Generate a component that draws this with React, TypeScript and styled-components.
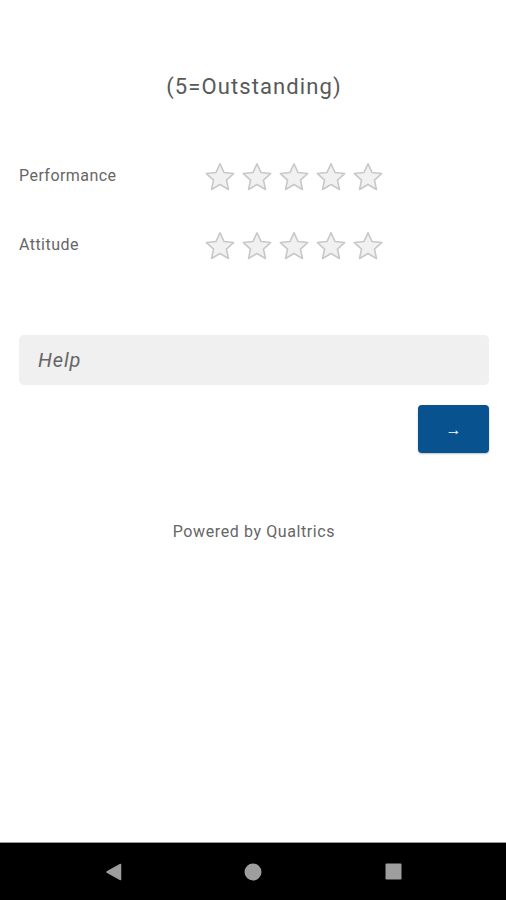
import styled, { createGlobalStyle } from 'styled-components';

const GlobalStyle = createGlobalStyle`
    html, body {
        margin: 0;
        padding: 0;
        background: #ffffff;
    }
    body {
        font-family: Roboto, "Noto Sans", Arial, sans-serif;
    }
`;

const Screen = styled.div`
    display: flex;
    flex-direction: column;
    width: 506px;
    height: 900px;
    overflow: hidden;
`;

const Survey = styled.main`
    flex: 1 1 auto;
    display: flex;
    flex-direction: column;
    padding: 73px 17px 0 19px;
`;

const Title = styled.h1`
    margin: 0;
    font-size: 22px;
    font-weight: 400;
    line-height: 28px;
    letter-spacing: 1.1px;
    color: #585858;
    text-align: center;
`;

const Matrix = styled.div`
    display: flex;
    flex-direction: column;
    gap: 35px;
    margin-top: 59px;
`;

const RatingRow = styled.div`
    display: flex;
    align-items: center;
    height: 34px;
`;

const Label = styled.span`
    flex: 0 0 185px;
    font-size: 16px;
    line-height: 20px;
    letter-spacing: 0.45px;
    color: #666666;
    margin-top: -3px;
`;

const Stars = styled.div`
    display: flex;
    gap: 5px;
`;

const StarButton = styled.button`
    display: flex;
    padding: 0;
    border: none;
    background: none;
    width: 32px;
    height: 31px;
    cursor: pointer;
`;

const HelpField = styled.input`
    box-sizing: border-box;
    width: 100%;
    height: 50px;
    margin-top: 72px;
    padding: 0 19px;
    border: none;
    border-radius: 5px;
    background: #f0f0f0;
    font-family: Roboto, "Noto Sans", Arial, sans-serif;
    font-size: 20px;
    font-style: italic;
    letter-spacing: 0.9px;
    color: #555555;
    outline: none;
    &::placeholder {
        color: #666666;
    }
`;

const Actions = styled.div`
    display: flex;
    justify-content: flex-end;
    margin-top: 20px;
`;

const NextButton = styled.button`
    width: 71px;
    height: 48px;
    border: none;
    border-radius: 4px;
    background: #07528f;
    color: #ffffff;
    font-family: Roboto, "Noto Sans", Arial, sans-serif;
    font-size: 16px;
    font-weight: 700;
    box-shadow: 0 1px 2px rgba(0, 0, 0, 0.25);
    cursor: pointer;
`;

const Powered = styled.p`
    margin: 69px 0 0;
    font-size: 16px;
    line-height: 20px;
    letter-spacing: 0.6px;
    color: #666666;
    text-align: center;
`;

const NavBar = styled.nav`
    flex: 0 0 57px;
    display: flex;
    justify-content: center;
    align-items: center;
    background: #000000;
    border-top: 1px solid #9a9a9a;
`;

const NavSlot = styled.button`
    display: flex;
    justify-content: center;
    align-items: center;
    width: 140px;
    height: 40px;
    padding: 0;
    border: none;
    background: none;
`;

const Star = () => (
    <svg width="32" height="31" viewBox="0 0 24 23">
        <path
            d="M12 1.2l3.05 6.6 7.15.75-5.35 4.85 1.5 7.05L12 16.8l-6.35 3.65 1.5-7.05L1.8 8.55l7.15-.75z"
            fill="#f1f1f1"
            stroke="#c8c8c8"
            strokeWidth="1.2"
            strokeLinejoin="round"
        />
    </svg>
);

const rows = ['Performance', 'Attitude'];

const App = () => (
    <Screen>
        <GlobalStyle />
        <Survey>
            <Title>(5=Outstanding)</Title>
            <Matrix>
                {rows.map((row) => (
                    <RatingRow key={row}>
                        <Label>{row}</Label>
                        <Stars>
                            {[1, 2, 3, 4, 5].map((n) => (
                                <StarButton key={n} aria-label={`${row} ${n}`}>
                                    <Star />
                                </StarButton>
                            ))}
                        </Stars>
                    </RatingRow>
                ))}
            </Matrix>
            <HelpField placeholder="Help" />
            <Actions>
                <NextButton>→</NextButton>
            </Actions>
            <Powered>Powered by Qualtrics</Powered>
        </Survey>
        <NavBar>
            <NavSlot aria-label="Back">
                <svg width="17" height="18" viewBox="0 0 17 18">
                    <path d="M15.5 1.5v15L2 9z" fill="#9e9e9e" stroke="#9e9e9e" strokeWidth="1.5" strokeLinejoin="round" />
                </svg>
            </NavSlot>
            <NavSlot aria-label="Home">
                <svg width="18" height="18" viewBox="0 0 18 18">
                    <circle cx="9" cy="9" r="8.5" fill="#9e9e9e" />
                </svg>
            </NavSlot>
            <NavSlot aria-label="Recents">
                <svg width="17" height="17" viewBox="0 0 17 17">
                    <rect x="0.5" y="0.5" width="16" height="16" rx="1" fill="#9e9e9e" />
                </svg>
            </NavSlot>
        </NavBar>
    </Screen>
);

export default App;
